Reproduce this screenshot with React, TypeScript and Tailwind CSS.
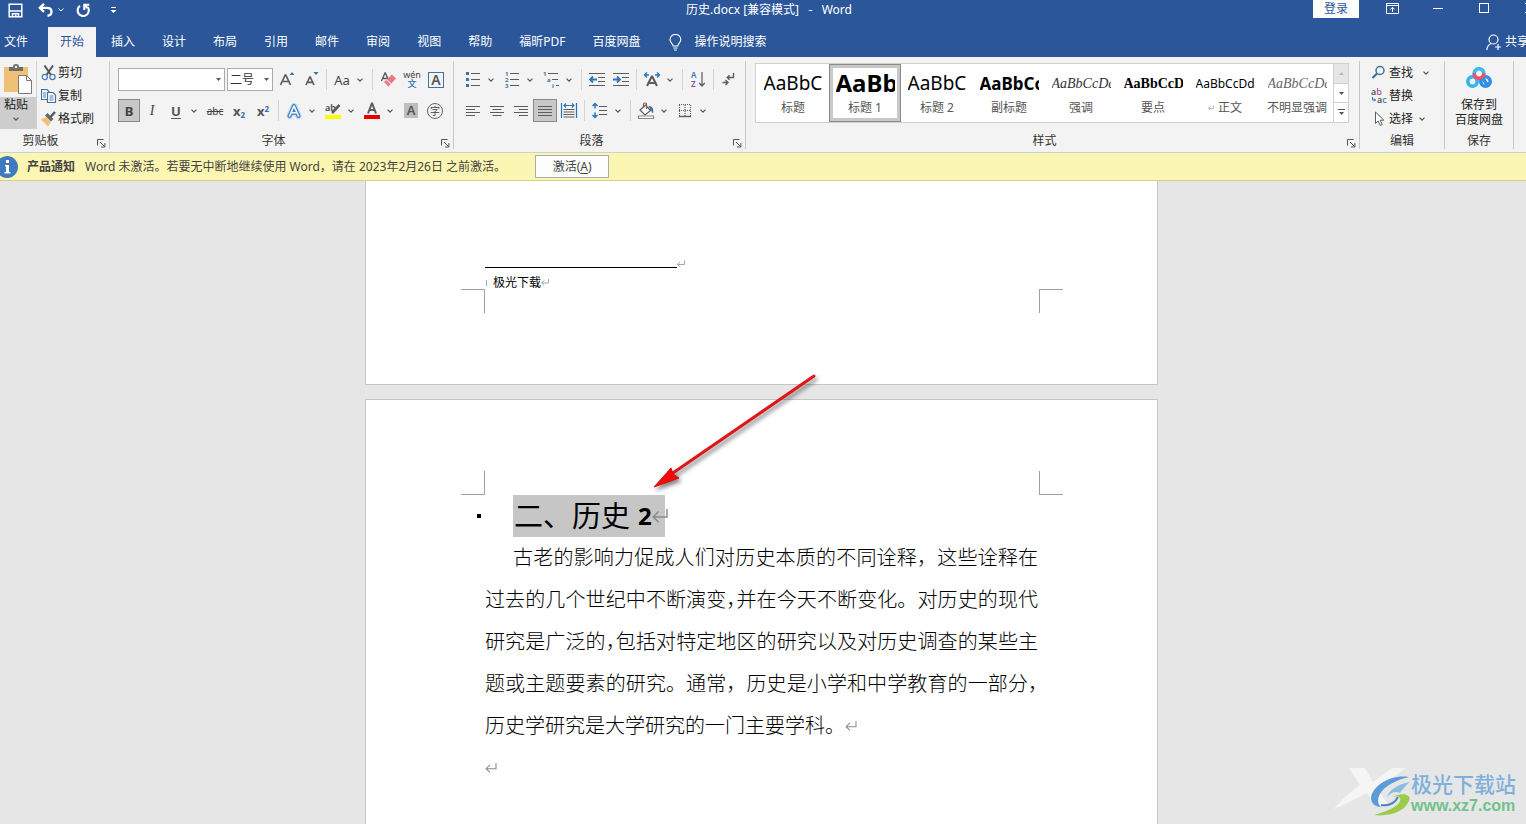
import type { ReactNode } from "react";
import clsx from "clsx";

const tabs = ["插入", "设计", "布局", "引用", "邮件", "审阅", "视图", "帮助", "福昕PDF", "百度网盘"];

const styleItems = [
  { name: "标题", sample: "AaBbC", look: "text-[19px] text-black" },
  { name: "标题 1", sample: "AaBb", look: "text-2xl font-bold text-black", active: true },
  { name: "标题 2", sample: "AaBbC", look: "text-[19px] text-black" },
  { name: "副标题", sample: "AaBbCc", look: "text-[17px] font-bold text-black" },
  { name: "强调", sample: "AaBbCcDd", look: "font-['Liberation_Serif',serif] text-sm italic text-[#333]" },
  { name: "要点", sample: "AaBbCcD", look: "font-['Liberation_Serif',serif] text-sm font-bold text-black" },
  { name: "正文", sample: "AaBbCcDd", look: "text-xs text-black", mark: true },
  { name: "不明显强调", sample: "AaBbCcDd", look: "font-['Liberation_Serif',serif] text-sm italic text-[#666]" },
];

/* ---------- small pieces ---------- */

function Chevron({ className = "" }: { className?: string }) {
  return (
    <svg className={clsx("h-1 w-1.5 shrink-0", className)} viewBox="0 0 6 4" fill="none" stroke="#555" strokeWidth="1.2">
      <path d="M.5 .6 3 3.1 5.5 .6" />
    </svg>
  );
}

function More({ label }: { label: string }) {
  return (
    <button type="button" aria-label={label} className="mr-[3px] flex h-[23px] w-3 items-center justify-center">
      <Chevron />
    </button>
  );
}

function Sep() {
  return <div className="mx-[3px] h-[21px] w-px shrink-0 bg-[#d4d4d4]" />;
}

function Tool({ label, active, children }: { label: string; active?: boolean; children: ReactNode }) {
  return (
    <button
      type="button"
      aria-label={label}
      className={clsx(
        "flex h-[23px] w-6 shrink-0 items-center justify-center leading-4",
        active && "border border-[#8a8a8a] bg-[#c8c8c8]"
      )}
    >
      {children}
    </button>
  );
}

function Icon({ children, size = 18 }: { children: ReactNode; size?: number }) {
  return (
    <svg
      width={size}
      height={size}
      viewBox={`0 0 ${size} ${size}`}
      className="shrink-0"
      fill="none"
      stroke="#5c5c5c"
      strokeWidth="1.2"
    >
      {children}
    </svg>
  );
}

function Combo({ label, value, className }: { label: string; value: string; className: string }) {
  return (
    <div className={clsx("relative h-[23px]", className)}>
      <select
        aria-label={label}
        defaultValue={value}
        className="h-full w-full appearance-none rounded-none border border-[#ababab] bg-white pl-0.5 text-xs text-[#333]"
      >
        <option value={value}>{value}</option>
      </select>
      <svg className="pointer-events-none absolute top-2.5 right-1 h-[3px] w-[5px]" viewBox="0 0 5 3" fill="#555">
        <path d="M0 0h5L2.500 3z" />
      </svg>
    </div>
  );
}

function Launcher() {
  return (
    <button type="button" aria-label="更多选项" className="flex h-4 w-4 items-center justify-center pt-1">
      <svg width="9" height="9" viewBox="0 0 9 9" fill="none" stroke="#555">
        <path d="M.5 6.500v-6h6M3 3l4.500 4.500M7.900 4v4h-4" />
      </svg>
    </button>
  );
}

function GroupLabel({ children, launcher = true }: { children: ReactNode; launcher?: boolean }) {
  return (
    <div className="mt-auto flex h-4 items-center text-[#333]">
      <span className="flex-1 text-center leading-4">{children}</span>
      {launcher && <Launcher />}
    </div>
  );
}

function ReturnMark({ className }: { className: string }) {
  return (
    <svg className={clsx("shrink-0", className)} viewBox="0 0 16 14" fill="none" stroke="#8a8a8a" strokeWidth="1.5">
      <path d="M15 0v8H1.500M6.500 2.500 1.200 8l5.300 5" />
    </svg>
  );
}

/* ---------- title bar and tabs ---------- */

function TitleBar() {
  return (
    <div className="grid h-[27px] grid-cols-[minmax(0,1fr)_auto_minmax(0,1fr)] text-white">
      <div className="flex h-5 items-center pl-2">
        <button type="button" aria-label="保存" className="w-4">
          <svg width="15" height="15" viewBox="0 0 15 15" fill="none" stroke="#fff" strokeWidth="1.500">
            <path d="M1.200 1.200h12.600v12.600H1.200zM1.200 8h12.600M4.500 13.800v-3h6v3" />
            <path d="M7 11.500h1.500V14H7z" fill="#fff" stroke="none" />
          </svg>
        </button>
        <button type="button" aria-label="撤消" className="ml-3.5 w-4">
          <svg width="15" height="14" viewBox="0 0 15 14" fill="none" stroke="#fff" strokeWidth="2.300">
            <path d="M6 .8 1.800 4.800 6 8.800M2 4.800h7c3 0 4.500 1.500 4.500 3.700 0 2.300-1.600 4-4 4.400" />
          </svg>
        </button>
        <svg className="ml-1 h-1 w-1.5" viewBox="0 0 6 4" fill="none" stroke="#fff">
          <path d="M.5 .6 3 3 5.500 .6" />
        </svg>
        <button type="button" aria-label="恢复" className="ml-3 w-4">
          <svg width="15" height="15" viewBox="0 0 15 15" fill="none" stroke="#fff" strokeWidth="2.100">
            <path d="M4 2.800A5.600 5.600 0 1 0 11.800 4.200" />
            <path d="M8.300 7V1.800h5" />
            <path d="m8.500 2 3 3" />
          </svg>
        </button>
        <button type="button" aria-label="自定义快速访问工具栏" className="ml-[18px]">
          <svg width="7" height="7" viewBox="0 0 7 7" fill="#fff">
            <path d="M1 0h5v1H1zM.5 3h6l-3 3.200z" />
          </svg>
        </button>
      </div>
      <h1 className="h-5 pl-3 leading-5 whitespace-pre">{"历史.docx [兼容模式]   -   Word"}</h1>
      <div className="-mr-[27px] flex h-5 items-start justify-end">
        <button type="button" className="mr-2.5 h-[18px] w-[46px] bg-white leading-[18px] text-[#2b579a]">
          登录
        </button>
        <button type="button" aria-label="功能区显示选项" className="flex h-4 w-[46px] items-center justify-center">
          <svg width="13" height="11" viewBox="0 0 13 11" fill="none" stroke="#fff">
            <path d="M.5 .5h12v10H.5zM.5 2.500h12M6.500 9V4.500M4.300 6.500l2.200-2.200 2.200 2.200" />
          </svg>
        </button>
        <button type="button" aria-label="最小化" className="flex h-4 w-[46px] items-center justify-center">
          <span className="h-px w-2.5 bg-white" />
        </button>
        <button type="button" aria-label="最大化" className="flex h-4 w-[46px] items-center justify-center">
          <span className="h-2.5 w-2.5 border border-white" />
        </button>
        <button type="button" aria-label="关闭" className="flex h-4 w-[46px] items-center justify-center">
          <svg width="10" height="10" viewBox="0 0 10 10" stroke="#fff">
            <path d="m0 0 10 10M10 0 0 10" />
          </svg>
        </button>
      </div>
    </div>
  );
}

function TabBar() {
  return (
    <nav aria-label="功能区" className="flex h-[30px] items-stretch gap-[3px] text-white">
      <button type="button" className="pr-[17px] pl-1">文件</button>
      <button type="button" className="bg-[#f3f3f3] px-3 text-[#2b579a]">开始</button>
      {tabs.map((tab) => (
        <button type="button" key={tab} className="px-3">
          {tab}
        </button>
      ))}
      <button type="button" className="flex items-center gap-3 px-3.5">
        <svg width="13" height="17" viewBox="0 0 13 17" fill="none" stroke="#fff" strokeWidth="1.100">
          <path d="M4 12c0-2.600-3-3.300-3-6.200a5.300 5.300 0 0 1 10.800 0C11.800 8.700 8.800 9.400 8.800 12zM4.300 14h4.200M5 16h2.800" />
        </svg>
        操作说明搜索
      </button>
      <button type="button" className="-mr-[3px] ml-auto flex items-center gap-1">
        <svg width="15" height="17" viewBox="0 0 15 17" fill="none" stroke="#fff" strokeWidth="1.200">
          <circle cx="7.500" cy="5.500" r="4.500" />
          <path d="M.8 16c.3-3.400 1.900-5.400 4.200-6.300M12 10v6M9 13h6" />
        </svg>
        共享
      </button>
    </nav>
  );
}

/* ---------- ribbon groups ---------- */

function ClipboardGroup() {
  return (
    <section className="flex w-[110px] shrink-0 flex-col border-r border-[#c6c6c6]">
      <div className="flex">
        <button type="button" className="flex h-[68px] w-[37px] flex-col border-r border-[#d0d0d0]">
          <span className="flex h-9 w-full items-center justify-center">
            <svg width="30" height="32" viewBox="0 0 30 32">
              <path d="M1 4h24v25H1z" fill="#eec177" />
              <path d="M6 8V4h4a3 3 0 0 1 6 0h4v4z" fill="#6b6b6b" />
              <circle cx="13" cy="4" r="1.200" fill="#f3f3f3" />
              <path d="M15.500 12.500h8l5 5v13h-13z" fill="#fff" stroke="#7a7a7a" />
              <path d="M23.500 12.500v5h5" fill="none" stroke="#7a7a7a" />
            </svg>
          </span>
          <span className="flex h-8 w-full flex-col items-center gap-1 bg-[#cdcdcd] pr-1 text-[#222]">
            <span className="leading-4">粘贴</span>
            <Chevron />
          </span>
        </button>
        <div className="flex flex-col pl-1 text-[#222]">
          <button type="button" className="flex h-[23px] items-center gap-px leading-4">
            <Icon size={16}>
              <path d="M3.500 .5 10 10M12 .5 5.500 10" stroke="#555" strokeWidth="2" />
              <circle cx="3.800" cy="12" r="2.600" stroke="#4a7ebb" />
              <circle cx="11.500" cy="12" r="2.600" stroke="#4a7ebb" />
            </Icon>
            剪切
          </button>
          <button type="button" className="flex h-[23px] items-center gap-px leading-4">
            <Icon size={16}>
              <path d="M.5 1.500H6l2 2v8H.5z" fill="#fff" stroke="#41719c" />
              <path d="M2 5h3M2 7h3M2 9h3" stroke="#4a7ebb" />
              <path d="M6.500 4.500H12l2.500 2.500v7.500h-8z" fill="#fff" stroke="#41719c" />
              <path d="M8.500 8h4M8.500 10h4M8.500 12h4" stroke="#4a7ebb" />
            </Icon>
            复制
          </button>
          <button type="button" className="flex h-[23px] items-center gap-px leading-4">
            <Icon size={16}>
              <path d="m0 8.500 5-2.500 5 5-3 4.500z" fill="#eec177" stroke="none" />
              <path d="m4 4.500 2.500-2.500 6 6-2.500 2.500z" fill="#666" stroke="none" />
              <path d="m9.500 6 4.500-5" strokeWidth="2.600" />
            </Icon>
            格式刷
          </button>
        </div>
      </div>
      <div className="mt-auto flex h-4 items-center text-[#333]">
        <span className="flex-1 pr-3 text-center leading-4">剪贴板</span>
        <Launcher />
      </div>
    </section>
  );
}

function FontGroup() {
  return (
    <section className="flex w-[344px] shrink-0 flex-col border-r border-[#c6c6c6] pt-[7px]">
      <div className="flex items-center pl-2">
        <Combo label="字体" value="" className="w-[107px]" />
        <Combo label="字号" value="二号" className="mr-0.5 ml-0.5 w-[46px]" />
        <Tool label="增大字号">
          <Icon>
            <path d="M2.500 14 7.200 4h.6l4.700 10M4.300 10.500h6.500" strokeWidth="1.700" />
            <path d="m11.500 4 2.500-3 2.500 3z" fill="#41719c" stroke="none" />
          </Icon>
        </Tool>
        <Tool label="减小字号">
          <Icon>
            <path d="M4 14 7.800 6h.4L12 14M5.300 11.300h5.400" strokeWidth="1.700" />
            <path d="m11.500 1 2.500 3 2.500-3z" fill="#41719c" stroke="none" />
          </Icon>
        </Tool>
        <Sep />
        <Tool label="更改大小写">
          <span className="text-[13px] text-[#444]">Aa</span>
        </Tool>
        <More label="大小写选项" />
        <Sep />
        <Tool label="清除所有格式">
          <Icon>
            <path d="M2.500 10 6 2h.4L9 8M3.500 7.500H8" strokeWidth="1.400" />
            <path d="m5 11 8-7.500 4 4-7.500 8z" fill="#e8798a" stroke="none" />
            <path d="m7.500 8.500 4.500 4.500" stroke="#f8d0d6" />
          </Icon>
        </Tool>
        <Tool label="拼音指南">
          <span className="flex flex-col items-center">
            <span className="text-[9px] leading-[9px] text-[#444]">wén</span>
            <span className="text-[9px] leading-[10px] font-medium text-[#2e75b6]">文</span>
          </span>
        </Tool>
        <Tool label="字符边框">
          <span className="h-4 w-4 border border-[#41719c] text-center text-sm leading-[14px] font-semibold text-[#555]">
            A
          </span>
        </Tool>
      </div>
      <div className="mt-2 flex items-center pl-2">
        <button
          type="button"
          aria-label="加粗"
          className="h-[23px] w-[22px] shrink-0 border border-[#8a8a8a] bg-[#c8c8c8] text-[13px] leading-5 font-bold text-[#444]"
        >
          B
        </button>
        <Tool label="倾斜">
          <span className="font-['Liberation_Serif',serif] text-sm text-[#444] italic">I</span>
        </Tool>
        <Tool label="下划线">
          <span className="text-[13px] font-bold text-[#555] underline underline-offset-2">U</span>
        </Tool>
        <More label="下划线选项" />
        <Tool label="删除线">
          <span className="text-[10px] text-[#444] line-through">abc</span>
        </Tool>
        <Tool label="下标">
          <span className="text-[13px] font-bold text-[#555]">
            x<sub className="text-[8px] text-[#2e75b6]">2</sub>
          </span>
        </Tool>
        <Tool label="上标">
          <span className="text-[13px] font-bold text-[#555]">
            x<sup className="text-[8px] text-[#2e75b6]">2</sup>
          </span>
        </Tool>
        <Sep />
        <Tool label="文本效果">
          <Icon>
            <g strokeLinejoin="round" strokeLinecap="round">
              <path d="M4.500 14 9 4l4.500 10M6.200 10.800h5.600" stroke="#bdd7ee" strokeWidth="6" />
              <path d="M4.500 14 9 4l4.500 10M6.200 10.800h5.600" stroke="#3f7fc4" strokeWidth="4" />
              <path d="M4.500 14 9 4l4.500 10M6.200 10.800h5.600" stroke="#fff" strokeWidth="1.600" />
            </g>
          </Icon>
        </Tool>
        <More label="文本效果选项" />
        <Tool label="突出显示">
          <Icon>
            <text x="1" y="9" fontSize="9" fontWeight="600" fill="#444" stroke="none">ab</text>
            <path d="m8 11 7.500-8" strokeWidth="2.600" />
            <path d="M1 13h16v4H1z" fill="#ff0" stroke="none" />
          </Icon>
        </Tool>
        <More label="突出显示颜色" />
        <Tool label="字体颜色">
          <Icon>
            <path d="M5 11.500 8.800 1.500h.4L13 11.500M6.200 8h5.600" strokeWidth="2" />
            <path d="M1 13h16v4H1z" fill="#e80000" stroke="none" />
          </Icon>
        </Tool>
        <More label="字体颜色选项" />
        <Tool label="字符底纹">
          <span className="h-[15px] w-3.5 bg-[#bdbdbd] text-center text-[13px] leading-[15px] font-semibold text-[#555]">
            A
          </span>
        </Tool>
        <Tool label="带圈字符">
          <span className="h-4 w-4 rounded-full border border-[#666] text-center text-[10px] leading-[14px] text-[#444]">
            字
          </span>
        </Tool>
      </div>
      <GroupLabel>字体</GroupLabel>
    </section>
  );
}

function ParagraphGroup() {
  return (
    <section className="flex w-[292px] shrink-0 flex-col border-r border-[#c6c6c6] pt-[7px]">
      <div className="flex items-center pl-[7px]">
        <Tool label="项目符号">
          <Icon>
            <path d="M7 2.500h9M7 8.500h9M7 14.500h9" />
            <path d="M2 1h3v3H2zM2 7h3v3H2zM2 13h3v3H2z" fill="#41719c" stroke="none" />
          </Icon>
        </Tool>
        <More label="项目符号库" />
        <Tool label="编号">
          <Icon>
            <path d="M7 2.500h9M7 8.500h9M7 14.500h9" />
            <g fontSize="6" fontWeight="700" fill="#41719c" stroke="none">
              <text x="2" y="5">1</text>
              <text x="2" y="11">2</text>
              <text x="2" y="17">3</text>
            </g>
          </Icon>
        </Tool>
        <More label="编号库" />
        <Tool label="多级列表">
          <Icon>
            <path d="M6 2.500h10M10 8.500h6M14 14.500h3" />
            <g fontSize="6" fontWeight="700" fill="#41719c" stroke="none">
              <text x="1" y="5">1</text>
              <text x="5" y="11">a</text>
              <text x="10" y="17">i</text>
            </g>
          </Icon>
        </Tool>
        <More label="列表库" />
        <Sep />
        <Tool label="减少缩进量">
          <Icon>
            <path d="M1 2.500h16M10 6.500h7M10 10.500h7M1 14.500h16" />
            <path d="M9 8.500H2M5 5.500 2 8.500l3 3" stroke="#2e75b6" strokeWidth="1.800" />
          </Icon>
        </Tool>
        <Tool label="增加缩进量">
          <Icon>
            <path d="M1 2.500h16M10 6.500h7M10 10.500h7M1 14.500h16" />
            <path d="M1 8.500h7M5 5.500l3 3-3 3" stroke="#2e75b6" strokeWidth="1.800" />
          </Icon>
        </Tool>
        <Sep />
        <Tool label="中文版式">
          <Icon>
            <path d="M4 15 8.700 5.500h.6L14 15M5.500 12h7" strokeWidth="2" />
            <path d="M6 4H1.500M4 1.500 1.500 4 4 6.500M12 4h4.500M14 1.500 16.500 4 14 6.500" stroke="#2e75b6" strokeWidth="1.400" />
          </Icon>
        </Tool>
        <More label="中文版式选项" />
        <Sep />
        <Tool label="排序">
          <Icon>
            <g fontSize="8" fontWeight="600" stroke="none">
              <text x="2" y="7" fill="#2e75b6">A</text>
              <text x="2" y="16" fill="#7d4f9e">Z</text>
            </g>
            <path d="M13 1v14M10.200 12l2.800 3 2.800-3" />
          </Icon>
        </Tool>
        <Sep />
        <Tool label="显示编辑标记">
          <Icon>
            <path d="M13.500 2v4.500H7.500M9.500 4.200 7.200 6.500l2.300 2.300M2.500 11.500h5M5.500 9l2.500 2.500L5.500 14" strokeWidth="1.400" />
          </Icon>
        </Tool>
      </div>
      <div className="mt-2 flex items-center pl-[7px]">
        <Tool label="左对齐">
          <Icon><path d="M2 4.500h14M2 7.500h9M2 10.500h14M2 13.500h9" /></Icon>
        </Tool>
        <Tool label="居中">
          <Icon><path d="M2 4.500h14M4.500 7.500h9M2 10.500h14M4.500 13.500h9" /></Icon>
        </Tool>
        <Tool label="右对齐">
          <Icon><path d="M2 4.500h14M7 7.500h9M2 10.500h14M7 13.500h9" /></Icon>
        </Tool>
        <Tool label="两端对齐" active>
          <Icon><path d="M2 4.500h14M2 7.500h14M2 10.500h14M2 13.500h14" /></Icon>
        </Tool>
        <Tool label="分散对齐">
          <Icon>
            <path d="M1.500 1v15M16.500 1v15M4 3.500h10M6 1.500l-2 2 2 2M12 1.500l2 2-2 2" stroke="#2e75b6" />
            <path d="M3.500 7.500h11M3.500 10h11M3.500 12.500h11M3.500 15h11" />
          </Icon>
        </Tool>
        <Sep />
        <Tool label="行和段落间距">
          <Icon>
            <path d="M8 4.500h8M8 8.500h8M8 12.500h8" />
            <path d="M4 1.500v5M4 10.500v5M1.500 4 4 1.500 6.500 4M1.500 13 4 15.500 6.500 13" stroke="#2e75b6" strokeWidth="1.500" />
          </Icon>
        </Tool>
        <More label="间距选项" />
        <Sep />
        <Tool label="底纹">
          <Icon>
            <path d="m3 8 5.500-5 5 5.500-5.500 4.500z" fill="#fff" />
            <path d="M6.500 6V2.500a1.500 1.500 0 0 1 3 0V7" stroke="#8a5a4a" />
            <path d="M11.500 4c4 0 5.500 2.500 4.500 7.500L13.500 8z" fill="#41719c" stroke="none" />
            <path d="M1.500 14h15v2.500h-15z" fill="#fff" stroke="#888" />
          </Icon>
        </Tool>
        <More label="底纹颜色" />
        <Tool label="边框">
          <Icon>
            <path d="M3 2.500h12M3 8.500h12M3.500 3v12M9 3v12M14.500 3v12" strokeDasharray="1 1" />
            <path d="M3 14.500h12" strokeWidth="1.400" />
          </Icon>
        </Tool>
        <More label="边框选项" />
      </div>
      <GroupLabel>段落</GroupLabel>
    </section>
  );
}

function StylesGroup() {
  return (
    <section className="flex min-w-0 flex-1 flex-col border-r border-[#c6c6c6] pt-0.5">
      <div className="mr-2.5 ml-[9px] flex h-[60px] border border-[#d0d0d0] bg-white">
        <div className="flex min-w-0 flex-1 overflow-hidden pl-px">
          {styleItems.map((item) => (
            <button
              type="button"
              key={item.name}
              className={clsx(
                "flex w-[72px] shrink-0 flex-col items-center",
                item.active && "border border-[#8a8a8a] ring-3 ring-[#c8c8c8] ring-inset"
              )}
            >
              <span
                className={clsx(
                  "flex w-[59px] shrink-0 items-center overflow-hidden whitespace-nowrap",
                  item.active ? "h-[35px]" : "h-9 pt-1",
                  item.look
                )}
              >
                {item.sample}
              </span>
              <span className="flex items-center gap-1 leading-4 whitespace-nowrap text-[#555]">
                {item.mark && <ReturnMark className="h-1.5 w-1.5" />}
                {item.name}
              </span>
            </button>
          ))}
        </div>
        <div className="flex w-[15px] flex-col divide-y divide-[#d0d0d0] border-l border-[#d0d0d0]">
          <button type="button" aria-label="上一行" className="flex flex-1 items-center justify-center bg-[#e6e6e6]">
            <svg width="5" height="3" viewBox="0 0 5 3" fill="#bbb"><path d="M0 3h5L2.500 0z" /></svg>
          </button>
          <button type="button" aria-label="下一行" className="flex flex-1 items-center justify-center">
            <svg width="5" height="3" viewBox="0 0 5 3" fill="#555"><path d="M0 0h5L2.500 3z" /></svg>
          </button>
          <button type="button" aria-label="其他" className="flex flex-1 items-center justify-center">
            <svg width="7" height="7" viewBox="0 0 7 7" fill="#555"><path d="M0 0h7v1H0zM1 3h5L3.500 6z" /></svg>
          </button>
        </div>
      </div>
      <GroupLabel>样式</GroupLabel>
    </section>
  );
}

function EditGroup() {
  return (
    <section className="flex w-[85px] shrink-0 flex-col border-r border-[#c6c6c6] text-[#222]">
      <button type="button" className="flex h-[23px] items-center gap-0.5 pl-[11px] leading-4">
        <Icon size={16}>
          <circle cx="9" cy="5.500" r="4" stroke="#41719c" strokeWidth="1.500" />
          <path d="m6 8.500-4.500 4.500" stroke="#41719c" strokeWidth="2.200" />
        </Icon>
        查找
        <Chevron className="ml-2" />
      </button>
      <button type="button" className="flex h-[23px] items-center gap-0.5 pl-[11px] leading-4">
        <Icon size={16}>
          <g fontSize="9" fontWeight="500" stroke="none">
            <text x="0" y="7" fill="#444">a<tspan fill="#9b4f9e">b</tspan></text>
            <text x="6" y="15" fill="#444">a<tspan fill="#2e75b6">c</tspan></text>
          </g>
          <path d="M1.500 9v3h3M3 10.500l1.500 1.500L3 13.500" stroke="#2e75b6" strokeWidth="1" />
        </Icon>
        替换
      </button>
      <button type="button" className="flex h-[23px] items-center gap-0.5 pl-[11px] leading-4">
        <Icon size={16}>
          <path d="M4.500 1v11.500l2.700-2.500 2 4.500 2-1-2-4.300h3.600z" fill="#fff" strokeWidth="1" />
        </Icon>
        选择
        <Chevron className="ml-1" />
      </button>
      <GroupLabel launcher={false}>编辑</GroupLabel>
    </section>
  );
}

function CloudGroup() {
  return (
    <section className="flex w-[69px] shrink-0 flex-col border-r border-[#c6c6c6] text-[#222]">
      <button type="button" className="flex flex-col items-center pt-1.5">
        <svg width="28" height="22" viewBox="0 0 28 22" fill="none" strokeWidth="3.600" strokeLinecap="round">
          <circle cx="7.500" cy="14.500" r="4.700" stroke="#35b4ea" />
          <circle cx="20.500" cy="14.500" r="4.700" stroke="#2f8fe8" />
          <path d="M9.300 7.500a4.800 4.800 0 1 1 9.400 0" stroke="#38bdf0" />
          <path d="M9.300 7.500a4.800 4.800 0 0 0 9.400 0" stroke="#f0506a" />
          <path d="m18.500 12.500 4 5.500" stroke="#2f8fe8" />
        </svg>
        <span className="mt-2 leading-[15px]">
          保存到
          <br />
          百度网盘
        </span>
      </button>
      <GroupLabel launcher={false}>保存</GroupLabel>
    </section>
  );
}

function NoticeBar() {
  return (
    <div role="status" className="flex h-7 shrink-0 items-center overflow-hidden border-b border-[#d6cf91] bg-[#fcf6b3] text-[#444]">
      <svg className="-ml-1 h-[22px] w-[22px] shrink-0" viewBox="0 0 22 22">
        <circle cx="11" cy="11" r="11" fill="#3f7abf" />
        <path d="M10 4h3v3h-3zM9 9h4v7h1.500v1.500H8.500V16H10v-5.500H9z" fill="#fff" />
      </svg>
      <strong className="ml-[9px]">产品通知</strong>
      <span className="ml-2.5">Word 未激活。若要无中断地继续使用 Word，请在 2023年2月26日 之前激活。</span>
      <button type="button" className="ml-[29px] h-[23px] w-[74px] border border-[#ababab] bg-[#fdfdfd] leading-5">
        激活(<u className="underline-offset-2">A</u>)
      </button>
    </div>
  );
}

/* ---------- document ---------- */

function Squeezed({ children }: { children: string }) {
  return <span className="[font-feature-settings:'halt']">{children}</span>;
}

function Document() {
  return (
    <main className="relative min-h-0 flex-1 overflow-hidden bg-[#e6e6e6] pr-[3px]">
      <article className="mx-auto w-[793px] border-x border-b border-[#c6c6c6] bg-white pt-[78px] pb-[71px] text-black">
        <div className="flex items-end pl-[119px]">
          <div className="h-[9px] w-48 border-b border-black" />
          <ReturnMark className="h-2 w-2" />
        </div>
        <p className="mt-2 flex h-[13px] items-center pl-[119px] leading-[14px]">
          <span className="mr-1.5 ml-px h-1.5 w-px bg-[#aaa]" />
          极光下载
          <ReturnMark className="h-[7px] w-2" />
        </p>
        <div className="flex h-6 justify-between pr-[94px] pl-[95px]">
          <span className="w-6 border-t border-r border-[#a0a0a0]" />
          <span className="w-6 border-t border-l border-[#a0a0a0]" />
        </div>
      </article>

      <article className="relative mx-auto mt-3.5 h-[1123px] w-[793px] border border-[#c6c6c6] bg-white pt-[71px] text-black">
        <div className="flex h-6 justify-between pr-[94px] pl-[95px]">
          <span className="w-6 border-r border-b border-[#a0a0a0]" />
          <span className="w-6 border-b border-l border-[#a0a0a0]" />
        </div>
        <div className="flex items-center gap-8 pl-[111px]">
          <span className="h-1 w-1 bg-black" />
          <h2 className="flex h-[42px] w-[152px] items-center bg-[#c6c6c6] pl-px text-[29px] leading-[42px] font-normal whitespace-nowrap">
            二、历史
            <span className="ml-2 text-2xl leading-[42px] font-bold">2</span>
            <ReturnMark className="h-3.5 w-4" />
          </h2>
        </div>
        <p className="px-[119px] text-xl leading-[42px] font-light whitespace-nowrap">
          <span className="block pl-7 [text-align-last:justify]">古老的影响力促成人们对历史本质的不同诠释，这些诠释在</span>
          <span className="block [text-align-last:justify]">
            过去的几个世纪中不断演变<Squeezed>，</Squeezed>并在今天不断变化。对历史的现代
          </span>
          <span className="block [text-align-last:justify]">
            研究是广泛的<Squeezed>，</Squeezed>包括对特定地区的研究以及对历史调查的某些主
          </span>
          <span className="block [text-align-last:justify]">
            题或主题要素的研究。通常，历史是小学和中学教育的一部分<Squeezed>，</Squeezed>
          </span>
          <span className="flex items-center">
            历史学研究是大学研究的一门主要学科。
            <ReturnMark className="h-2.5 w-3" />
          </span>
          <span className="flex h-[42px] items-center">
            <ReturnMark className="h-2.5 w-3" />
          </span>
        </p>
        <svg
          className="absolute -top-8 left-[282px] drop-shadow-[2px_3px_2px_rgba(0,0,0,0.5)]"
          width="176"
          height="128"
          viewBox="0 0 176 128"
        >
          <path d="M166 8 22 107" stroke="#e0151a" strokeWidth="3" strokeLinecap="round" />
          <path d="M6 119 23 100l2 6 6 4z" fill="#f00a0a" stroke="#d01010" />
        </svg>
      </article>

      <div className="absolute right-2.5 bottom-1 flex items-end">
        <svg width="80" height="56" viewBox="0 0 80 56" fill="none">
          <path d="M18 4h16l8 14L61 4h14L47 25l11 17H44l-8-13C24 35 13 41 3 45c6-8 15-16 26-24z" fill="#f5f5f5" />
          <path d="M78 13C60 10 41 22 40 34c0 5 4 9 10 9-4-4-4-10 1-16s14-11 27-14z" fill="#5b9bd8" />
          <path d="M79 18c-12 2-22 9-23 15 4-5 9-6 13-4 2-3 5-7 10-11z" fill="#8bbce2" />
          <path d="M61 33c8-2 10 1 7 6-4 5-14 9-25 12 16 2 31-4 35-14 3-7-7-9-17-4z" fill="#9ccb4a" />
          <path d="M50 41c8 1 14-2 17-8" stroke="#4b83c4" strokeWidth="2" />
        </svg>
        <div className="pb-1">
          <div className="text-[21px] leading-6 font-medium text-[#7fb0dc]">极光下载站</div>
          <div className="font-['Liberation_Sans',sans-serif] text-base leading-5 font-bold text-[#6fc38c]">www.xz7.com</div>
        </div>
      </div>
    </main>
  );
}

export default function App() {
  return (
    <div
      lang="zh-CN"
      className="flex h-screen flex-col overflow-hidden font-['Noto_Sans','Noto_Sans_CJK_SC',sans-serif] text-xs"
    >
      <header className="shrink-0 overflow-hidden bg-[#2b579a]">
        <TitleBar />
        <TabBar />
      </header>
      <div className="flex h-24 shrink-0 border-b border-[#d0d0d0] bg-[#f3f3f3] pt-1 pr-3 pb-[3px]">
        <ClipboardGroup />
        <FontGroup />
        <ParagraphGroup />
        <StylesGroup />
        <EditGroup />
        <CloudGroup />
      </div>
      <NoticeBar />
      <Document />
    </div>
  );
}
